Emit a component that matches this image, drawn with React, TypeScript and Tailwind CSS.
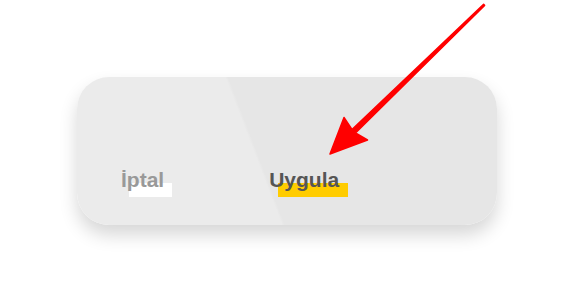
const Arrow = () => (
  <svg
    className="pointer-events-none absolute left-0 top-0"
    width="574"
    height="303"
    viewBox="0 0 574 303"
  >
    <polygon
      points="330,154 344,117.5 352,129.5 483.6,4.4 484.6,5.4 355.5,133 367.5,140"
      fill="#ff0000"
      stroke="#ff0000"
      strokeWidth="1.5"
      strokeLinejoin="round"
    />
  </svg>
);

const App = () => {
  return (
    <div className="relative h-[303px] w-[574px] overflow-hidden bg-white font-['Liberation_Sans',Arial,sans-serif]">
      <div className="pl-[77px] pt-[77px]">
        <div className="flex h-[148px] w-[420px] items-end rounded-[32px] bg-[linear-gradient(69deg,#ebebeb_43%,#e6e6e6_43.6%)] pb-[35px] shadow-[0_10px_18px_rgba(0,0,0,0.16)]">
          <button className="relative ml-[44px] text-[21px] font-bold leading-none text-[#999999]">
            <span className="absolute left-[8px] top-[14px] h-[14px] w-[43px] bg-white" />
            <span className="relative">İptal</span>
          </button>
          <button className="relative ml-[105px] text-[21px] font-bold leading-none text-[#555555]">
            <span className="absolute left-[9px] top-[14px] h-[14px] w-[70px] bg-[#ffcc00]" />
            <span className="relative">Uygula</span>
          </button>
        </div>
      </div>
      <Arrow />
    </div>
  );
};

export default App;
